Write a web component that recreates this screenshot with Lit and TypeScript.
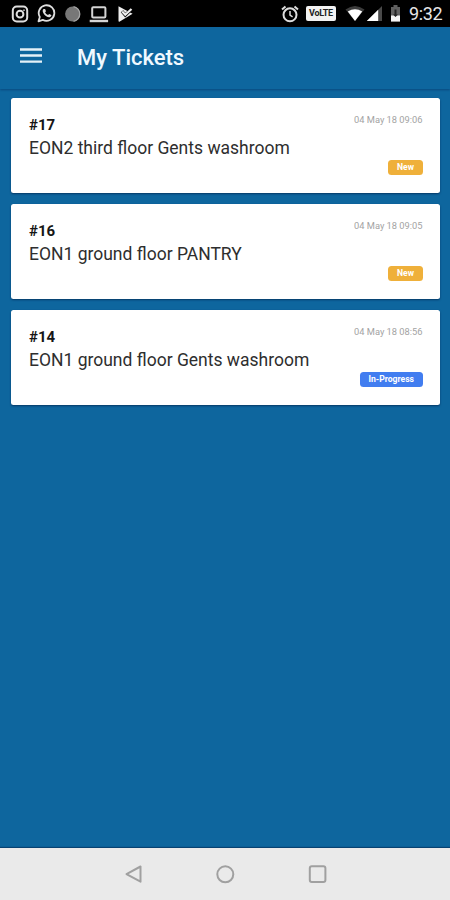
import { LitElement, html, css, svg } from "lit";
import { customElement, property } from "lit/decorators.js";

interface Ticket {
  id: number;
  title: string;
  date: string;
  status: "New" | "In-Progress";
}

const TICKETS: Ticket[] = [
  { id: 17, title: "EON2 third floor Gents washroom", date: "04 May 18 09:06", status: "New" },
  { id: 16, title: "EON1 ground floor PANTRY", date: "04 May 18 09:05", status: "New" },
  { id: 14, title: "EON1 ground floor Gents washroom", date: "04 May 18 08:56", status: "In-Progress" },
];

@customElement("status-bar")
export class StatusBar extends LitElement {
  static styles = css`
    :host {
      display: flex;
      justify-content: space-between;
      align-items: center;
      height: 27px;
      box-sizing: border-box;
      padding: 0 8px 0 11px;
      background: #000;
      color: #e6e6e6;
    }
    .group { display: flex; align-items: center; }
    .left { gap: 7.8px; }
    svg { display: block; flex: none; }
    .volte {
      width: 30px;
      height: 15px;
      margin: 0 9px 0 7px;
      border-radius: 2px;
      background: #f2f2f2;
      color: #222;
      font: 700 9px/15px Roboto, sans-serif;
      letter-spacing: -0.3px;
      text-align: center;
      white-space: nowrap;
    }
    .signal { margin-left: 1px; }
    .battery { margin: 0 8px 0 7px; }
    .time { font: 400 18px/24px Roboto, sans-serif; letter-spacing: -0.4px; width: 33px; padding-top: 1px; white-space: nowrap; }
  `;

  render() {
    return html`
      <div class="group left">
        <svg width="18" height="18" viewBox="0 0 18 18" fill="none" stroke="#dedede" stroke-width="2">
          <rect x="1.8" y="1.5" width="14.4" height="15" rx="4" />
          <circle cx="9" cy="9.2" r="3.4" /><circle cx="13" cy="5.2" r="0.5" stroke-width="1" />
        </svg>
        <svg width="19" height="19" viewBox="0 0 19 19" fill="none" stroke="#dedede">
          <path d="M1.5 17.3 2.8 13a7.8 7.8 0 1 1 3 2.9Z" stroke-width="1.8" stroke-linejoin="round" />
          <path d="M6.5 4.9c-3 2.5 2.9 9.5 6.6 8.1 1.1-.4 1.4-1.3 1.2-2l-2.1-1.1-1.2 1.2c-1.3-.5-2.3-1.5-2.9-2.8l.9-1-.9-2.3Z" fill="#dedede" stroke="none" />
        </svg>
        <svg width="18" height="18" viewBox="0 0 18 18">
          <circle cx="8.6" cy="9" r="7.5" fill="#777" />
          <path d="M9.5 1.6A7.5 7.5 0 0 1 9.5 16.4" fill="none" stroke="#a6a6a6" stroke-width="1.3" />
        </svg>
        <svg width="20" height="18" viewBox="0 0 20 18" fill="none" stroke="#d4d4d4" stroke-width="2">
          <rect x="3.2" y="2.2" width="13.2" height="10.4" rx="1" /><path d="M.7 16h18.4" stroke-width="2.4" />
        </svg>
        <svg width="18" height="18" viewBox="0 0 18 18">
          <path d="M1.5 1.2 7.5 4.6 15.6 8.7 2.8 16.6Q1.5 17.2 1.5 15.7Z" fill="#efefef" />
          <path d="m5 6.2 3.3 4L15 3.6" fill="none" stroke="#000" stroke-width="3.2" />
          <path d="m5.2 6.5 3.1 3.3L14.5 4" fill="none" stroke="#efefef" stroke-width="2.2" />
        </svg>
      </div>
      <div class="group">
        <svg width="18" height="18" viewBox="0 0 18 18" fill="none" stroke="#dedede">
          <circle cx="9" cy="9.8" r="6.5" stroke-width="2" />
          <path d="M9 6v4.2l2.6 1.6" stroke-width="1.5" /><path d="m1 4.5 3.5-3M17 4.5l-3.5-3" stroke-width="2" />
        </svg>
        <div class="volte">VoLTE</div>
        <svg width="20" height="17" viewBox="0 0 20 17">
          <path d="M.5 4.5Q10-2.5 19.5 4.5L10 16Z" fill="#3b3b3b" />
          <path d="M2.8 6.6Q10 1.7 17.2 6.6L10 16Z" fill="#fff" />
        </svg>
        <svg class="signal" width="17" height="17" viewBox="0 0 17 17">
          <path d="M16 1v15H.8Z" fill="#4a4a4a" /><path d="M12.2 4.7V16H.8Z" fill="#fff" />
        </svg>
        <svg class="battery" width="11" height="17" viewBox="0 0 11 17">
          <path d="M3.500 0h4v2H10v14.500H1V2h2.500Z" fill="#606060" />
          <path d="M1 10.500h9v6H1Z" fill="#f5f5f5" /><path d="M4.500 4.500h2v5h1.500L5.500 12 3 9.500h1.500Z" fill="#222" />
        </svg>
        <div class="time">9:32</div>
      </div>
    `;
  }
}

@customElement("ticket-card")
export class TicketCard extends LitElement {
  @property({ attribute: false }) ticket!: Ticket;

  static styles = css`
    :host {
      display: flex;
      justify-content: space-between;
      box-sizing: border-box;
      height: 95.5px;
      padding: 16.5px 17.5px 18px 18px;
      background: #fff;
      border-radius: 2.5px;
      box-shadow: 0 1px 2px rgba(0, 25, 65, 0.6);
      font-family: Roboto, sans-serif;
      white-space: nowrap;
    }
    .id { font-size: 15px; line-height: 22px; font-weight: 700; color: #161616; }
    .title { margin-top: 1px; font-size: 17.5px; line-height: 23px; color: #2e2e2e; }
    .meta { display: flex; flex-direction: column; align-items: flex-end; justify-content: space-between; }
    .date { font-size: 9.3px; line-height: 12px; color: #a3a3a3; }
    .badge {
      height: 15px;
      padding: 0 8.5px;
      border-radius: 3.5px;
      color: #fff;
      font-size: 8.6px;
      line-height: 15px;
      font-weight: 700;
    }
    .new { background: #efb03a; }
    .progress { background: #417df0; }
  `;

  render() {
    const t = this.ticket;
    return html`
      <div>
        <div class="id">#${t.id}</div>
        <div class="title">${t.title}</div>
      </div>
      <div class="meta">
        <div class="date">${t.date}</div>
        <div class="badge ${t.status === "New" ? "new" : "progress"}">${t.status}</div>
      </div>
    `;
  }
}

@customElement("app-root")
export class AppRoot extends LitElement {
  static styles = css`
    :host {
      display: flex;
      flex-direction: column;
      height: 900px;
      background: #0e669e;
      font-family: Roboto, sans-serif;
    }
    header {
      display: flex;
      align-items: center;
      gap: 35px;
      height: 62px;
      box-sizing: border-box;
      padding: 0 20px;
      background: #0e669e;
      box-shadow: 0 1px 2px rgba(0, 30, 80, 0.4);
      color: #f0f9ff;
    }
    header svg { display: block; margin-top: -5px; }
    h1 { margin: 0; font-size: 22px; line-height: 28px; font-weight: 500; white-space: nowrap; }
    main { flex: 1; display: flex; flex-direction: column; gap: 10.5px; padding: 8.5px 10px 0 11px; }
    nav {
      display: flex;
      justify-content: center;
      align-items: center;
      gap: 72.3px;
      height: 52px;
      background: #eaeaea;
      box-shadow: 0 -1px 1px rgba(0, 30, 70, 0.5);
    }
    nav svg { display: block; }
  `;

  render() {
    const shapes = [
      svg`<path d="M17.5 2.5v15.2L3.500 10.100Z" />`,
      svg`<circle cx="10.3" cy="10.3" r="8" />`,
      svg`<rect x="2.8" y="2.3" width="15.6" height="15.8" rx="2" />`,
    ];
    return html`
      <status-bar></status-bar>
      <header>
        <svg width="22" height="16" viewBox="0 0 22 16" stroke="#e4f1f8" stroke-width="2.3">
          <path d="M0 1.5h22M0 7.5h22M0 13.7h22" />
        </svg>
        <h1>My Tickets</h1>
      </header>
      <main>${TICKETS.map((t) => html`<ticket-card .ticket=${t}></ticket-card>`)}</main>
      <nav>
        ${shapes.map(
          (s) => html`<svg width="20" height="20" viewBox="0 0 20 20" fill="none" stroke="#a0a0a0" stroke-width="2" stroke-linejoin="round">${s}</svg>`
        )}
      </nav>
    `;
  }
}
